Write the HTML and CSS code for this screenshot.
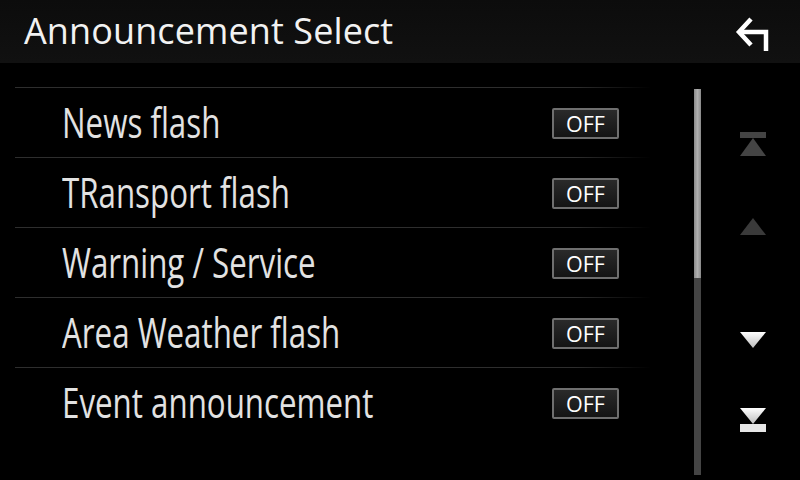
FILE: index.html
```html
<!DOCTYPE html>
<html>
<head>
<meta charset="utf-8">
<link rel="stylesheet" href="styles.css">
</head>
<body>
<div class="screen">
  <header class="header">
    <h1 class="title">Announcement Select</h1>
    <button class="back" aria-label="Back">
      <svg width="36" height="36" viewBox="0 0 36 36">
        <path d="M16 3 L4 16 L16 29" fill="none" stroke="#fff" stroke-width="4.5" stroke-linejoin="miter"/>
        <path d="M4 16 H31 V35" fill="none" stroke="#fff" stroke-width="4.5"/>
      </svg>
    </button>
  </header>
  <main class="body">
    <ul class="list">
      <li class="row"><span class="label">News flash</span><span class="toggle">OFF</span></li>
      <li class="row"><span class="label">TRansport flash</span><span class="toggle">OFF</span></li>
      <li class="row"><span class="label">Warning / Service</span><span class="toggle">OFF</span></li>
      <li class="row"><span class="label">Area Weather flash</span><span class="toggle">OFF</span></li>
      <li class="row"><span class="label">Event announcement</span><span class="toggle">OFF</span></li>
    </ul>
    <div class="scrollbar"><div class="thumb"></div></div>
    <nav class="scroll-btns">
      <svg class="sb top" width="26" height="24" viewBox="0 0 26 24">
        <rect x="0" y="0" width="26" height="6" fill="#444"/>
        <polygon points="0,24 13,6 26,24" fill="#444"/>
      </svg>
      <svg class="sb up" width="26" height="17" viewBox="0 0 26 17">
        <polygon points="0,17 13,0 26,17" fill="#3a3a3a"/>
      </svg>
      <svg class="sb down" width="26" height="16" viewBox="0 0 26 16">
        <defs><linearGradient id="g1" x1="0" y1="0" x2="0" y2="1"><stop offset="0" stop-color="#ffffff"/><stop offset="1" stop-color="#bdbdbd"/></linearGradient></defs>
        <polygon points="0,0 26,0 13,16" fill="url(#g1)"/>
      </svg>
      <svg class="sb bottom" width="26" height="24" viewBox="0 0 26 24">
        <defs><linearGradient id="g2" x1="0" y1="0" x2="0" y2="1"><stop offset="0" stop-color="#ffffff"/><stop offset="1" stop-color="#bdbdbd"/></linearGradient></defs>
        <polygon points="0,0 26,0 13,16" fill="url(#g2)"/>
        <rect x="0" y="16" width="26" height="8" fill="#e6e6e6"/>
      </svg>
    </nav>
  </main>
</div>
</body>
</html>
```

FILE: styles.css
```css
* { box-sizing: border-box; }
html, body { margin: 0; padding: 0; background: #000; }
.screen {
  width: 800px;
  height: 480px;
  overflow: hidden;
  background: #000;
  display: flex;
  flex-direction: column;
  font-family: "Open Sans", "Noto Sans", sans-serif;
}
.header {
  height: 63px;
  flex: none;
  display: flex;
  align-items: center;
  background: linear-gradient(#0c0c0c, #111111);
  padding: 0 29px 0 24px;
}
.title {
  margin: 0;
  font-weight: 400;
  font-size: 36px;
  color: #f2f2f2;
  letter-spacing: 0.1px;
  flex: 1;
  position: relative;
  top: -1px;
  white-space: nowrap;
}
.back {
  background: none;
  border: 0;
  padding: 0;
  width: 36px;
  height: 36px;
  position: relative;
  top: 2px;
}
.back svg { display: block; }
.body {
  flex: 1;
  display: flex;
}
.list {
  list-style: none;
  margin: 24px 0 0 15px;
  padding: 0;
  width: 635px;
}
.row {
  height: 70px;
  display: flex;
  align-items: center;
  padding: 0 31px 0 47px;
  border-top: 1px solid;
  border-image: linear-gradient(90deg, #2e2e2e 0%, #2e2e2e 88%, rgba(46,46,46,0) 100%) 1;
}
.label {
  display: inline-block;
  font-size: 42px;
  color: #e2e2e2;
  transform: scaleX(0.745);
  transform-origin: left center;
  white-space: nowrap;
  position: relative;
  top: -1px;
}
.toggle {
  margin-left: auto;
  width: 67px;
  height: 31px;
  border: 2px solid #6f6f6f;
  border-radius: 2px;
  background: linear-gradient(#2a2a2a, #141414);
  color: #fff;
  font-size: 21.5px;
  line-height: 27px;
  text-align: center;
  position: relative;
  top: 1px;
}
.scrollbar {
  margin: 26px 0 5px 44px;
  width: 7px;
  background: #444;
  display: flex;
  flex-direction: column;
}
.thumb {
  height: 189px;
  background: linear-gradient(90deg, #8a8a8a, #b0b0b0 50%, #8a8a8a);
}
.scroll-btns {
  flex: 1;
  display: flex;
  flex-direction: column;
  align-items: center;
  padding-left: 5px;
}
.sb { display: block; }
.sb.top { margin-top: 69px; }
.sb.up { margin-top: 62px; }
.sb.down { margin-top: 97px; }
.sb.bottom { margin-top: 60px; }
```
